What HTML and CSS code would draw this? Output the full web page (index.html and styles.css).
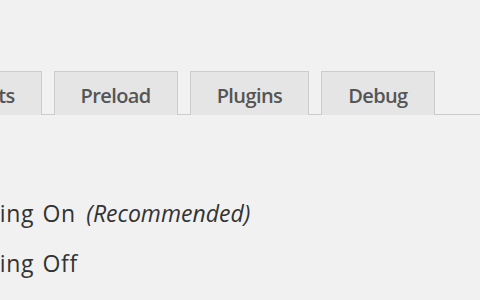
FILE: index.html
```html
<!DOCTYPE html>
<html>
<head>
<meta charset="utf-8">
<link rel="stylesheet" href="styles.css">
</head>
<body>
<div class="page">
  <nav class="tabs">
    <a class="tab">Contents</a>
    <a class="tab">Preload</a>
    <a class="tab">Plugins</a>
    <a class="tab">Debug</a>
  </nav>
  <div class="options">
    <label class="opt"><span class="radio"></span><span class="label">Caching On <em>(Recommended)</em></span></label>
    <label class="opt"><span class="radio"></span><span class="label">Caching Off</span></label>
  </div>
</div>
</body>
</html>
```
FILE: styles.css
```css
html, body {
  margin: 0;
  padding: 0;
  background: #f1f1f1;
  overflow: hidden;
}
.page {
  width: 480px;
  height: 300px;
  padding-top: 71px;
  box-sizing: border-box;
  font-family: "Open Sans", "Noto Sans", sans-serif;
}
.tabs {
  display: flex;
  gap: 12px;
  border-bottom: 1px solid #cccccc;
  margin-left: -95px;
  height: 43px;
}
.tab {
  display: block;
  box-sizing: border-box;
  height: 44px;
  padding: 3px 26px 0;
  border: 1px solid #cccccc;
  border-bottom: none;
  background: #e5e5e5;
  color: #555555;
  font-weight: 600;
  font-size: 20px;
  letter-spacing: -0.6px;
  line-height: 41px;
  white-space: nowrap;
}
.options {
  margin-top: 83px;
  margin-left: -85px;
  display: flex;
  flex-direction: column;
  gap: 20px;
}
.opt {
  display: flex;
  align-items: center;
  gap: 10px;
  font-size: 23px;
  line-height: 30px;
  color: #333333;
}
.label {
  letter-spacing: 0.6px;
  word-spacing: 2px;
}
.label em {
  letter-spacing: 0;
  margin-left: 2px;
}
.radio {
  width: 18px;
  height: 18px;
  border-radius: 50%;
  border: 1px solid #b4b9be;
  background: #fff;
}
```
